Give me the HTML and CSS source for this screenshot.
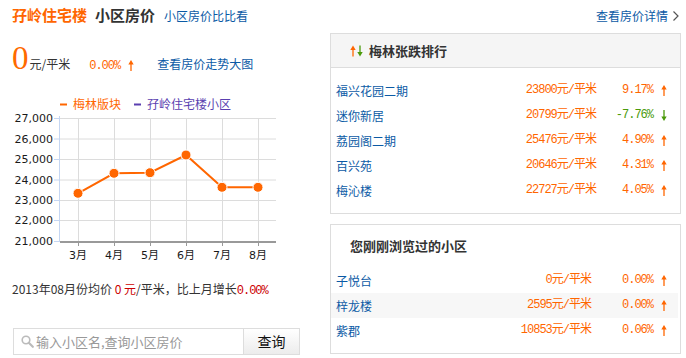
FILE: index.html
```html
<!DOCTYPE html>
<html><head>
<meta charset="utf-8">
<link rel="stylesheet" href="styles.css">
</head>
<body>

<svg width="0" height="0" class="defs">
  <defs>
    <g id="arrowUp"><path d="M3 3 V11" stroke="currentColor" stroke-width="1.3"/><path d="M0.3 4.5 L3 0 L5.7 4.5 Z" fill="currentColor"/></g>
    <g id="arrowDown"><path d="M3 0 V8" stroke="currentColor" stroke-width="1.3"/><path d="M0.3 6.5 L3 11 L5.7 6.5 Z" fill="currentColor"/></g>
  </defs>
</svg>

<div class="top">
  <span class="estate">孖岭住宅楼</span>
  <span class="topic">小区房价</span>
  <a class="link small-link">小区房价比比看</a>
  <a class="link more">查看房价详情
    <svg width="8" height="12" viewBox="0 0 8 12"><path d="M1.5 1.5 L6 6 L1.5 10.5" fill="none" stroke="#555" stroke-width="1.2"/></svg>
  </a>
</div>

<div class="main">
  <div class="left">
    <div class="price-row">
      <span class="big">0</span>
      <span class="unit">元/平米</span>
      <span class="num up rate">0.00%</span>
      <svg class="ico up arrow" width="6" height="11"><use href="#arrowUp"/></svg>
      <a class="link trend">查看房价走势大图</a>
    </div>

    <!-- price trend, drawn in page coordinates -->
    <svg class="chart" width="300" height="170" viewBox="0 92 300 170">
      <g class="legend">
        <line x1="60" y1="104.5" x2="67" y2="104.5" stroke="#ff6600" stroke-width="2"/>
        <text x="73" y="109" fill="#ff6600">梅林版块</text>
        <line x1="134" y1="104.5" x2="141" y2="104.5" stroke="#5a3fb0" stroke-width="2"/>
        <text x="147" y="109" fill="#5a3fb0">孖岭住宅楼小区</text>
      </g>
      <g stroke="#dcdcdc" stroke-width="1">
        <line x1="60" y1="118.5" x2="276" y2="118.5"/>
        <line x1="60" y1="139" x2="276" y2="139"/>
        <line x1="60" y1="159.5" x2="276" y2="159.5"/>
        <line x1="60" y1="180" x2="276" y2="180"/>
        <line x1="60" y1="200.5" x2="276" y2="200.5"/>
        <line x1="60" y1="220.5" x2="276" y2="220.5"/>
        <line x1="78.5" y1="118" x2="78.5" y2="242"/>
        <line x1="114.5" y1="118" x2="114.5" y2="242"/>
        <line x1="150.5" y1="118" x2="150.5" y2="242"/>
        <line x1="186.5" y1="118" x2="186.5" y2="242"/>
        <line x1="222.5" y1="118" x2="222.5" y2="242"/>
        <line x1="258.5" y1="118" x2="258.5" y2="242"/>
      </g>
      <g stroke="#c5d6f2" stroke-width="1">
        <line x1="59.5" y1="116" x2="59.5" y2="242"/>
        <line x1="54" y1="118.5" x2="59" y2="118.5"/>
        <line x1="54" y1="139" x2="59" y2="139"/>
        <line x1="54" y1="159.5" x2="59" y2="159.5"/>
        <line x1="54" y1="180" x2="59" y2="180"/>
        <line x1="54" y1="200.5" x2="59" y2="200.5"/>
        <line x1="54" y1="220.5" x2="59" y2="220.5"/>
        <line x1="54" y1="241.5" x2="59" y2="241.5"/>
      </g>
      <g stroke="#999" stroke-width="1">
        <line x1="60" y1="242" x2="276" y2="242" stroke-width="2"/>
        <line x1="78.5" y1="242" x2="78.5" y2="246"/>
        <line x1="114.5" y1="242" x2="114.5" y2="246"/>
        <line x1="150.5" y1="242" x2="150.5" y2="246"/>
        <line x1="186.5" y1="242" x2="186.5" y2="246"/>
        <line x1="222.5" y1="242" x2="222.5" y2="246"/>
        <line x1="258.5" y1="242" x2="258.5" y2="246"/>
      </g>
      <g class="ylabels" text-anchor="end">
        <text x="53" y="122">27,000</text>
        <text x="53" y="143">26,000</text>
        <text x="53" y="163">25,000</text>
        <text x="53" y="184">24,000</text>
        <text x="53" y="204">23,000</text>
        <text x="53" y="224">22,000</text>
        <text x="53" y="245">21,000</text>
      </g>
      <g class="xlabels" text-anchor="middle">
        <text x="78" y="259">3月</text>
        <text x="114" y="259">4月</text>
        <text x="150" y="259">5月</text>
        <text x="186" y="259">6月</text>
        <text x="222" y="259">7月</text>
        <text x="258" y="259">8月</text>
      </g>
      <polyline points="78,193.3 114,173.3 150,172.7 186,155 222,187.3 258,187.3" fill="none" stroke="#ff6600" stroke-width="2"/>
      <g fill="#ff6600" stroke="#fff" stroke-width="1">
        <circle cx="78" cy="193.3" r="5"/>
        <circle cx="114" cy="173.3" r="5"/>
        <circle cx="150" cy="172.7" r="5"/>
        <circle cx="186" cy="155" r="5"/>
        <circle cx="222" cy="187.3" r="5"/>
        <circle cx="258" cy="187.3" r="5"/>
      </g>
    </svg>

    <p class="avg">2013年08月份均价 <span class="red">0 元</span>/平米，比上月增长<span class="red num">0.00%</span></p>

    <div class="search">
      <div class="search-input">
        <svg width="13" height="13" viewBox="0 0 13 13"><circle cx="5" cy="5" r="3.8" fill="none" stroke="#bbb" stroke-width="1.6"/><path d="M7.8 7.8 L11.8 11.8" stroke="#bbb" stroke-width="2.2" stroke-linecap="round"/></svg>
        <span>输入小区名,查询小区房价</span>
      </div>
      <div class="search-btn">查询</div>
    </div>
  </div>

  <div class="right">
    <div class="box">
      <div class="box-head">
        <svg class="ico up" width="6" height="12" viewBox="0 0 6 11"><use href="#arrowUp"/></svg>
        <svg class="ico down" width="6" height="12" viewBox="0 0 6 11"><use href="#arrowDown"/></svg>
        <span class="head-text">梅林张跌排行</span>
      </div>
      <div class="rows">
        <div class="row"><a class="link">福兴花园二期</a><span class="num up price">23800元/平米</span><span class="num up pct">9.17%</span><span class="up arr"><svg class="ico" width="6" height="11"><use href="#arrowUp"/></svg></span></div>
        <div class="row"><a class="link">迷你新居</a><span class="num up price">20799元/平米</span><span class="num down pct">-7.76%</span><span class="down arr"><svg class="ico" width="6" height="11"><use href="#arrowDown"/></svg></span></div>
        <div class="row"><a class="link">荔园阁二期</a><span class="num up price">25476元/平米</span><span class="num up pct">4.90%</span><span class="up arr"><svg class="ico" width="6" height="11"><use href="#arrowUp"/></svg></span></div>
        <div class="row"><a class="link">百兴苑</a><span class="num up price">20646元/平米</span><span class="num up pct">4.31%</span><span class="up arr"><svg class="ico" width="6" height="11"><use href="#arrowUp"/></svg></span></div>
        <div class="row"><a class="link">梅沁楼</a><span class="num up price">22727元/平米</span><span class="num up pct">4.05%</span><span class="up arr"><svg class="ico" width="6" height="11"><use href="#arrowUp"/></svg></span></div>
      </div>
    </div>

    <div class="box recent">
      <div class="recent-title">您刚刚浏览过的小区</div>
      <div class="rows">
        <div class="row"><a class="link">子悦台</a><span class="num up price">0元/平米</span><span class="num up pct">0.00%</span><span class="up arr"><svg class="ico" width="6" height="11"><use href="#arrowUp"/></svg></span></div>
        <div class="row shade"><a class="link">梓龙楼</a><span class="num up price">2595元/平米</span><span class="num up pct">0.00%</span><span class="up arr"><svg class="ico" width="6" height="11"><use href="#arrowUp"/></svg></span></div>
        <div class="row"><a class="link">紫郡</a><span class="num up price">10853元/平米</span><span class="num up pct">0.06%</span><span class="up arr"><svg class="ico" width="6" height="11"><use href="#arrowUp"/></svg></span></div>
      </div>
    </div>
  </div>
</div>

</body>
</html>
```

FILE: styles.css
```css
/* page base */
body {
  margin: 0;
  width: 686px;
  font-family: "Noto Sans CJK SC", "Liberation Sans", sans-serif;
  font-size: 12px;
  line-height: 16px;
  color: #333;
  background: #fff;
}

.defs {
  position: absolute;
}

.link {
  color: #0b5aa5;
  text-decoration: none;
}

.num {
  font-family: "Liberation Mono", "Noto Sans CJK SC", monospace;
  letter-spacing: -1px;
}

.up { color: #ff6600; }
.down { color: #4a9a0a; }
.red { color: #cc0000; }

.ico {
  display: inline-block;
  overflow: visible;
}

/* title row */
.top {
  display: flex;
  align-items: baseline;
  height: 25px;
  padding: 5px 6px 0 12px;
  box-sizing: border-box;
  line-height: 20px;
}
.estate {
  color: #ff6600;
  font-size: 15px;
  font-weight: bold;
}
.topic {
  margin-left: 8px;
  color: #333;
  font-size: 15px;
  font-weight: bold;
}
.small-link {
  margin-left: 9px;
}
.more {
  margin-left: auto;
  display: flex;
  align-items: center;
  gap: 4px;
  margin-top: -2px;
}

/* two columns */
.main {
  display: flex;
  margin-top: 8px;
}
.left {
  width: 330px;
}
.right {
  width: 351px;
}

/* current price */
.price-row {
  display: flex;
  align-items: baseline;
  height: 30px;
  padding: 10px 0 0 12px;
}
.big {
  font-family: "Liberation Serif", serif;
  font-size: 33px;
  line-height: 30px;
  color: #ff6a00;
}
.unit {
  margin-left: 1px;
}
.rate {
  margin-left: 19px;
}
.arrow {
  margin-left: 8px;
  align-self: flex-end;
  margin-bottom: 2px;
}
.trend {
  margin-left: 23px;
}

/* chart */
.chart {
  display: block;
  margin-top: 19px;
}
.legend text {
  font-family: "Noto Sans CJK SC", sans-serif;
  font-size: 12px;
}
.ylabels text {
  font-family: "DejaVu Sans", sans-serif;
  font-size: 11px;
  fill: #1a1a1a;
}
.xlabels text {
  font-family: "DejaVu Sans", "Noto Sans CJK SC", sans-serif;
  font-size: 11px;
  fill: #1a1a1a;
}

.avg {
  margin: 20px 0 0 12px;
  line-height: 14px;
}

/* search */
.search {
  display: flex;
  width: 287px;
  height: 27px;
  margin: 30px 0 0 13px;
  border: 1px solid #ddd;
  box-sizing: border-box;
}
.search-input {
  flex: 1;
  display: flex;
  align-items: center;
  gap: 2px;
  padding-left: 7px;
  color: #999;
  font-size: 13px;
}
.search-btn {
  width: 55px;
  border-left: 1px solid #ddd;
  background: linear-gradient(#ffffff, #ececec);
  color: #111;
  font-size: 14px;
  line-height: 25px;
  text-align: center;
}

/* right boxes */
.box {
  border: 1px solid #ddd;
}
.box-head {
  display: flex;
  align-items: center;
  gap: 1px;
  height: 33px;
  padding-left: 19px;
  background: #f5f5f5;
  border-bottom: 1px solid #ddd;
  font-size: 13px;
  font-weight: bold;
  color: #333;
}
.head-text {
  margin-left: 5px;
}
.rows {
  padding: 10px 0 10px;
}
.row {
  display: grid;
  grid-template-columns: 1fr auto 57px 25px;
  height: 25px;
  line-height: 25px;
  padding-left: 5px;
  margin-right: 2px;
}
.price,
.pct {
  text-align: right;
}
.arr {
  display: flex;
  align-items: center;
  padding-left: 8px;
}

.recent {
  margin-top: 10px;
}
.recent-title {
  padding: 11px 0 0 19px;
  line-height: 20px;
  font-size: 13px;
  font-weight: bold;
  color: #333;
}
.recent .rows {
  padding-top: 12px;
}
.recent .price {
  padding-right: 5px;
}
.shade {
  background: #f7f7f7;
}
```
